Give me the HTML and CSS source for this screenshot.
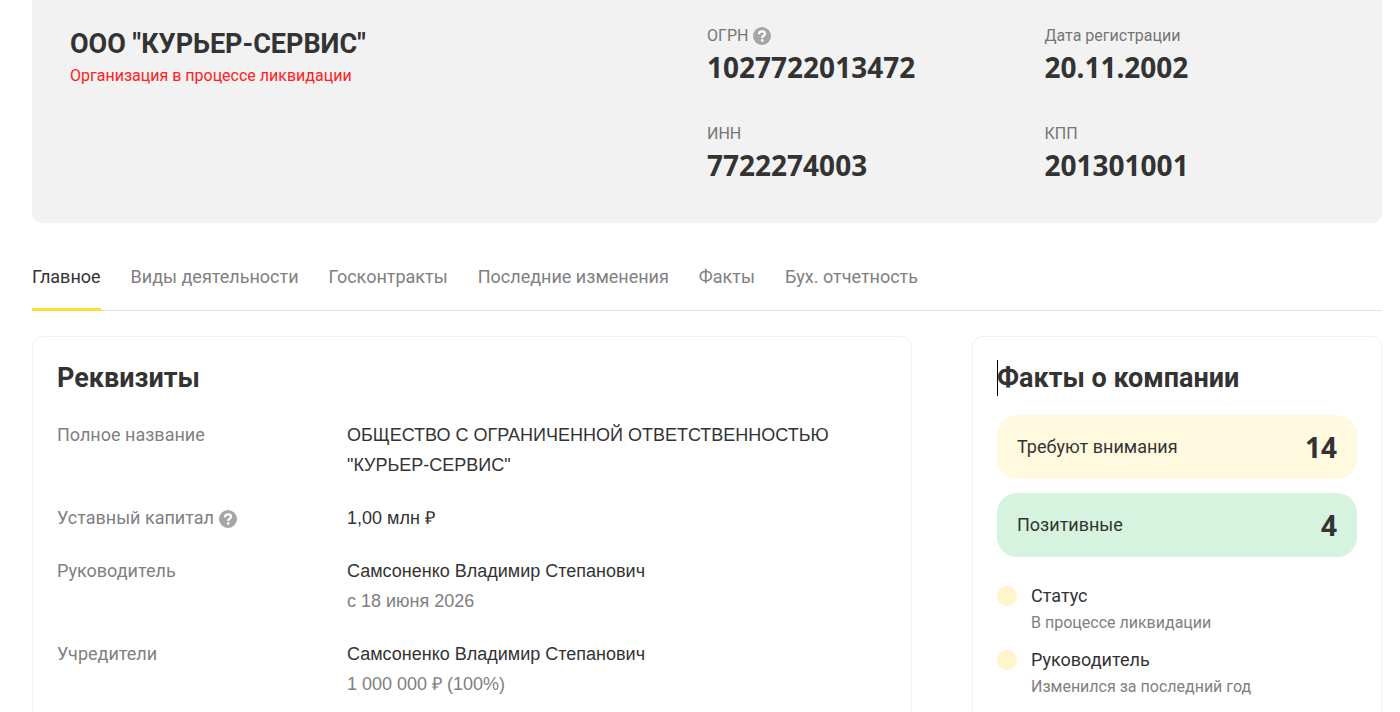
FILE: index.html
```html
<!DOCTYPE html>
<html lang="ru">
<head>
    <meta charset="UTF-8">
    <meta name="viewport" content="width=device-width, initial-scale=1.0">
    <title>ООО "КУРЬЕР-СЕРВИС"</title>
    <link rel="stylesheet" href="styles.css">
</head>
<body>

<div class="page">
    <header class="company">
        <div class="company-title">
            <h1>ООО "КУРЬЕР-СЕРВИС"</h1>
            <p class="company-status">Организация в процессе ликвидации</p>
        </div>
        <dl class="codes">
            <div>
                <dt>ОГРН
                    <button type="button" class="help" aria-label="ОГРН">
                        <svg viewBox="0 0 18 18"><circle cx="9" cy="9" r="9" fill="#a6a6a6"/><path d="M6 7.200C6 5.300 7.300 4.400 9 4.400c1.800 0 3 .9 3 2.300 0 1.900-2.800 1.900-2.800 4.200" fill="none" stroke="#fff" stroke-width="2.200"/><circle cx="9.200" cy="13.400" r="1.300" fill="#fff"/></svg>
                    </button>
                </dt>
                <dd>1027722013472</dd>
            </div>
            <div>
                <dt>Дата регистрации</dt>
                <dd>20.11.2002</dd>
            </div>
            <div>
                <dt>ИНН</dt>
                <dd>7722274003</dd>
            </div>
            <div>
                <dt>КПП</dt>
                <dd>201301001</dd>
            </div>
        </dl>
    </header>

    <nav class="tabs">
        <a href="#main" class="active">Главное</a>
        <a href="#activities">Виды деятельности</a>
        <a href="#contracts">Госконтракты</a>
        <a href="#changes">Последние изменения</a>
        <a href="#facts">Факты</a>
        <a href="#reports">Бух. отчетность</a>
    </nav>

    <main class="content">
        <section class="card" id="main">
            <h2>Реквизиты</h2>
            <dl class="details">
                <dt>Полное название</dt>
                <dd>ОБЩЕСТВО С ОГРАНИЧЕННОЙ ОТВЕТСТВЕННОСТЬЮ<br>"КУРЬЕР-СЕРВИС"</dd>
                <dt>Уставный капитал
                    <button type="button" class="help" aria-label="Уставный капитал">
                        <svg viewBox="0 0 18 18"><circle cx="9" cy="9" r="9" fill="#a6a6a6"/><path d="M6 7.200C6 5.300 7.300 4.400 9 4.400c1.800 0 3 .9 3 2.300 0 1.900-2.800 1.900-2.800 4.200" fill="none" stroke="#fff" stroke-width="2.200"/><circle cx="9.200" cy="13.400" r="1.300" fill="#fff"/></svg>
                    </button>
                </dt>
                <dd>1,00 млн ₽</dd>
                <dt>Руководитель</dt>
                <dd>Самсоненко Владимир Степанович<span class="note">с 18 июня 2026</span></dd>
                <dt>Учредители</dt>
                <dd>Самсоненко Владимир Степанович<span class="note">1 000 000 ₽ (100%)</span></dd>
            </dl>
        </section>

        <aside class="card" id="facts">
            <h2 class="caret">Факты о компании</h2>
            <div class="summary warning">Требуют внимания <strong>14</strong></div>
            <div class="summary positive">Позитивные <strong>4</strong></div>
            <ul class="facts">
                <li>Статус<span>В процессе ликвидации</span></li>
                <li>Руководитель<span>Изменился за последний год</span></li>
            </ul>
        </aside>
    </main>
</div>

</body>
</html>
```

FILE: styles.css
```css
* { box-sizing: border-box; }
body { margin: 0; font-family: Roboto, "Liberation Sans", Arial, sans-serif; font-size: 18px; line-height: 30px; color: #333; background: #fff; }
h1, h2, p, dl, dd, ul { margin: 0; padding: 0; }
h1, h2 { font-size: 27px; font-weight: 700; }
.codes dd, .summary strong { font-family: "Noto Sans", sans-serif; font-size: 28px; font-weight: 700; }
.page { padding: 0 18px 0 32px; }

.company { display: grid; grid-template-columns: 1fr 1fr; padding: 24px 0 39px; background: #f2f2f2; border-radius: 0 0 10px 10px; }
.company-title { padding-left: 38px; }
.company h1 { line-height: 40px; }
.company-status { font-size: 16px; line-height: 24px; color: #ff2020; }
.codes { display: grid; grid-template-columns: 1fr 1fr; row-gap: 36px; }
.codes dt { font-size: 16px; line-height: 24px; color: #757575; }
.codes dd { line-height: 38px; }
.help { display: inline-block; width: 18px; height: 18px; margin-left: 1px; padding: 0; border: 0; background: none; vertical-align: text-bottom; cursor: pointer; }
.help svg { display: block; width: 18px; height: 18px; }

.tabs { display: flex; gap: 30px; margin-top: 39px; border-bottom: 1px solid #e0e0e0; }
.tabs a { margin-bottom: -1px; padding-bottom: 16px; border-bottom: 3px solid transparent; color: #808080; text-decoration: none; }
.tabs a.active { color: #333; border-color: #ffdd2d; }

.content { display: grid; grid-template-columns: 880px 1fr; gap: 60px; margin-top: 25px; }
.card { padding: 23px 24px; border: 1px solid #eef1f6; border-radius: 10px; }
.card h2 { line-height: 36px; }
.details { display: grid; grid-template-columns: 290px 1fr; row-gap: 23px; margin-top: 24px; }
.details dd { font-family: "Liberation Sans", Arial, sans-serif; }
.details dt, .note { color: #808080; }
.note { display: block; }

.caret { position: relative; }
.caret::before { content: ""; position: absolute; top: 0; bottom: 0; left: 0; width: 1px; background: #000; }
.summary { display: flex; justify-content: space-between; align-items: center; height: 64px; margin-top: 14px; padding: 0 20px; border-radius: 20px; }
.caret + .summary { margin-top: 19px; }
.warning { background: #fff9e0; }
.positive { background: #d5f3de; }
.facts { margin-top: 24px; list-style: none; }
.facts li { position: relative; margin-bottom: 10px; padding-left: 34px; }
.facts li::before { content: ""; position: absolute; top: 5px; left: 0; width: 20px; height: 20px; border-radius: 50%; background: #fff5cc; }
.facts span { display: block; font-size: 16px; line-height: 24px; color: #808080; }
```
